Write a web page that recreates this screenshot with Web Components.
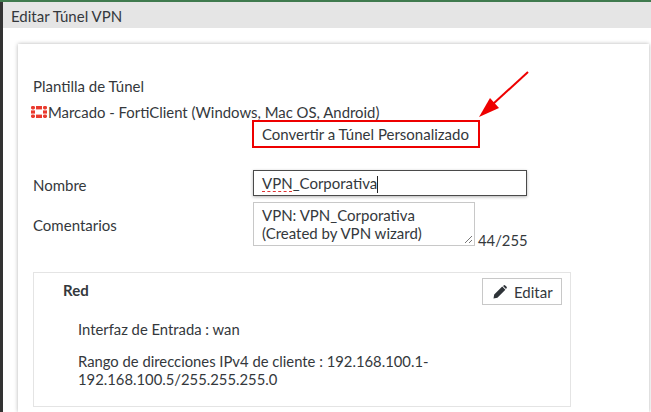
<!DOCTYPE html>
<html>
<head>
<meta charset="utf-8">
<style>
html, body { margin: 0; padding: 0; height: 100%; overflow: hidden; background: #fff; }
body { font: 15px/16px Lato, "Liberation Sans", sans-serif; color: #34383c; }
</style>
</head>
<body>
<vpn-dialog heading="Editar Túnel VPN">
	<template-info name="Marcado - FortiClient (Windows, Mac OS, Android)" action="Convertir a Túnel Personalizado"></template-info>
	<form-row label="Nombre"><input-box value="VPN_Corporativa"></input-box></form-row>
	<form-row label="Comentarios" class="comments"><comment-box count="44/255">VPN: VPN_Corporativa<br>(Created by VPN wizard)</comment-box></form-row>
	<section-card heading="Red">
		<p>Interfaz de Entrada : wan</p>
		<p>Rango de direcciones IPv4 de cliente : 192.168.100.1-<br>192.168.100.5/255.255.255.0</p>
	</section-card>
</vpn-dialog>

<script>
	// outer frame: green strip, grey title bar, the white card with the shadow
	class VpnDialog extends HTMLElement {
		connectedCallback() {
			this.attachShadow({ mode: 'open' });
			this.shadowRoot.innerHTML = `
			<style>
			:host { display: flex; flex-direction: column; height: 412px; background: #fff; border-left: 3px solid #333; box-sizing: border-box; position: relative; }
			#top { height: 2px; background: #3f7a4e; margin-left: -3px; flex: none; }
			#title { height: 26px; flex: none; background: #e5e5e5; padding-left: 8px; line-height: 28px; color: #34383c; }
			#card { flex: 1; margin: 16px 2px 0 15px; padding: 26px 14px 0 15px; box-shadow: 0 0 4px rgba(0,0,0,.3); overflow: hidden; }
			</style>
			<div id="top"></div>
			<div id="title">${this.getAttribute('heading')}</div>
			<div id="card"><slot></slot></div>
			<svg style="position:absolute;left:474px;top:68px" width="58" height="52" viewBox="0 0 58 52">
				<path d="M51 4 L16 36" stroke="#ee0000" stroke-width="2" fill="none"/>
				<path d="M2 49 L13 30 L22 40 Z" fill="#ee0000"/>
			</svg>`;
		}
	}

	class TemplateInfo extends HTMLElement {
		connectedCallback() {
			this.attachShadow({ mode: 'open' });
			this.shadowRoot.innerHTML = `
			<style>
			:host { display: block; }
			#label { line-height: 18px; margin-top: 7px; }
			#name { display: flex; align-items: center; margin: 8px 0 0 -2px; height: 18px; white-space: nowrap; font-size: 14.9px; }
			svg { flex: none; margin-right: 1px; }
			#action { box-sizing: border-box; height: 28px; line-height: 25px; margin: -1px 0 0 219px; padding: 0 8px; border: 2px solid #ee0000; white-space: nowrap; width: 228px; }
			</style>
			<div id="label">Plantilla de Túnel</div>
			<div id="name">
				<svg width="16" height="12" viewBox="0 0 16 12"><g fill="#ea3a2e">
					<rect x="0" y="0" width="4" height="3.4" rx="1.4"/><rect x="5" y="0" width="6" height="3.4"/><rect x="12" y="0" width="4" height="3.4" rx="1.4"/>
					<rect x="0" y="4.4" width="4" height="3.2"/><rect x="12" y="4.4" width="4" height="3.2"/>
					<rect x="0" y="8.6" width="4" height="3.4" rx="1.4"/><rect x="5" y="8.6" width="6" height="3.4"/><rect x="12" y="8.6" width="4" height="3.4" rx="1.4"/>
				</g></svg>${this.getAttribute('name')}
			</div>
			<div id="action">${this.getAttribute('action')}</div>`;
		}
	}

	class FormRow extends HTMLElement {
		connectedCallback() {
			this.attachShadow({ mode: 'open' });
			this.shadowRoot.innerHTML = `
			<style>
			:host { display: flex; margin-top: 6px; }
			:host(:first-of-type) { margin-top: 22px; }
			#label { width: 220px; flex: none; height: 26px; line-height: 30px; }
			:host(.comments) #label { height: 44px; line-height: 46px; }
			</style>
			<div id="label">${this.getAttribute('label')}</div>
			<slot></slot>`;
		}
	}

	class InputBox extends HTMLElement {
		connectedCallback() {
			this.attachShadow({ mode: 'open' });
			this.shadowRoot.innerHTML = `
			<style>
			:host { display: block; box-sizing: border-box; width: 274px; height: 26px; border: 1px solid #4a4a4a; box-shadow: 0 1px 3px rgba(0,0,0,.3); padding: 0 8px; line-height: 25px; }
			span { text-decoration: underline dashed #e03030 1px; text-underline-offset: 2px; }
			i { display: inline-block; width: 1px; height: 17px; background: #222; vertical-align: -4px; }
			</style>
			<span>VPN</span>_Corporativa<i></i>`;
		}
	}

	class CommentBox extends HTMLElement {
		connectedCallback() {
			this.attachShadow({ mode: 'open' });
			this.shadowRoot.innerHTML = `
			<style>
			:host { display: flex; align-items: flex-end; }
			#area { box-sizing: border-box; width: 222px; height: 44px; border: 1px solid #c8c8c8; padding: 3px 8px 0; line-height: 18px; position: relative; }
			#grip { position: absolute; right: 1px; bottom: 1px; }
			#count { margin: 0 0 -2px 3px; line-height: 16px; white-space: nowrap; font-size: 14.8px; }
			</style>
			<div id="area"><slot></slot>
				<svg id="grip" width="9" height="9" viewBox="0 0 9 9"><path d="M1 8 L8 1 M5 8 L8 5" stroke="#777" stroke-width="1"/></svg>
			</div>
			<div id="count">${this.getAttribute('count')}</div>`;
		}
	}

	class SectionCard extends HTMLElement {
		connectedCallback() {
			this.attachShadow({ mode: 'open' });
			this.shadowRoot.innerHTML = `
			<style>
			:host { display: block; box-sizing: border-box; margin-top: 26px; width: 538px; height: 135px; border: 1px solid #e4e4e4; padding: 5px 8px 0 29px; }
			#head { display: flex; justify-content: space-between; align-items: flex-start; }
			h3 { margin: 4px 0 0; font-size: 15px; line-height: 16px; font-weight: 700; }
			button { display: flex; align-items: center; gap: 7px; box-sizing: border-box; height: 27px; width: 80px; padding: 0 0 0 10px; background: #fff; border: 1px solid #c8c8c8; font: inherit; color: inherit; }
			#body { padding-left: 15px; margin-top: 15px; font-size: 14.8px; }
			::slotted(p) { margin: 0 0 14px; line-height: 18px; }
			</style>
			<div id="head">
				<h3>${this.getAttribute('heading')}</h3>
				<button>
					<svg width="14" height="14" viewBox="0 0 14 14"><path fill="#2e3338" d="M0.5 13.5 L1.2 9.6 L9.2 1.6 L12.4 4.8 L4.4 12.8 Z M10 0.9 L11 0.2 Q11.6 -0.1 12.2 0.4 L13.6 1.8 Q14 2.4 13.7 3 L13 4.1 Z"/></svg>
					Editar
				</button>
			</div>
			<div id="body"><slot></slot></div>`;
		}
	}

	window.customElements.define('vpn-dialog', VpnDialog);
	window.customElements.define('template-info', TemplateInfo);
	window.customElements.define('form-row', FormRow);
	window.customElements.define('input-box', InputBox);
	window.customElements.define('comment-box', CommentBox);
	window.customElements.define('section-card', SectionCard);
</script>
</body>
</html>
